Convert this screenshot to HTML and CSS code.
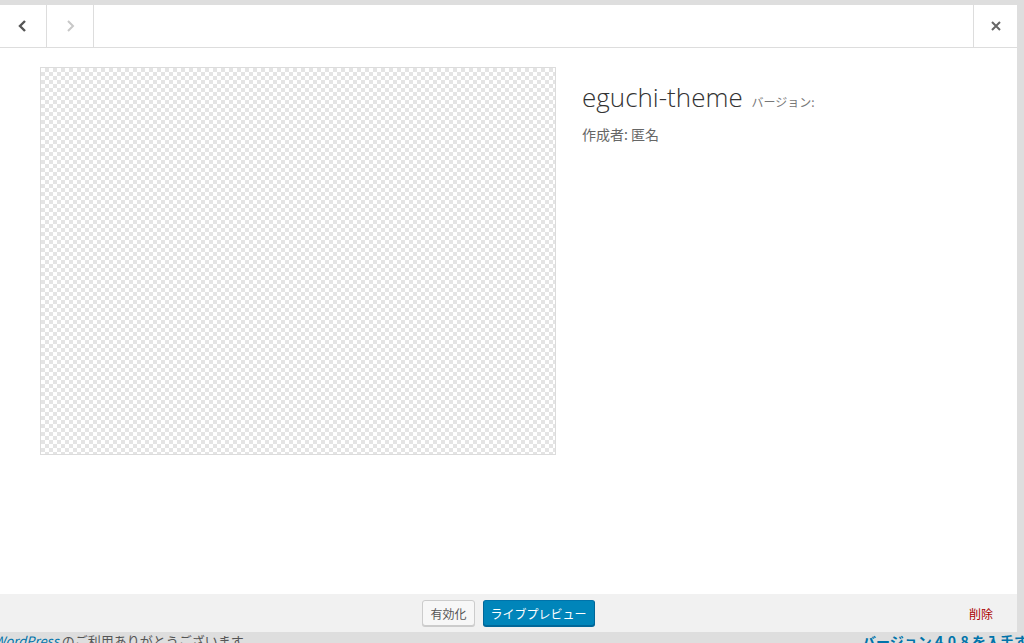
FILE: index.html
```html
<!DOCTYPE html>
<html lang="ja">
<head>
  <meta charset="UTF-8">
  <title>テーマの詳細</title>
  <link rel="stylesheet" href="styles.css">
</head>
<body>
<div class="page">
  <div class="modal">
    <div class="modal-header">
      <button class="nav-btn left" aria-label="前へ">
        <svg width="12" height="14" viewBox="0 0 12 14"><path d="M8 2 L3 7 L8 12" fill="none" stroke="#555" stroke-width="2.4"/></svg>
      </button>
      <button class="nav-btn right disabled" aria-label="次へ">
        <svg width="12" height="14" viewBox="0 0 12 14"><path d="M4 2 L9 7 L4 12" fill="none" stroke="#c8c8c8" stroke-width="2"/></svg>
      </button>
      <div class="spacer"></div>
      <button class="close-btn" aria-label="閉じる">
        <svg width="12" height="12" viewBox="0 0 12 12"><path d="M2 2 L10 10 M10 2 L2 10" fill="none" stroke="#666" stroke-width="2"/></svg>
      </button>
    </div>

    <div class="theme-about">
      <div class="screenshot"></div>
      <div class="theme-info">
        <h2 class="theme-name">eguchi-theme <span class="version">バージョン:</span></h2>
        <p class="theme-author">作成者: 匿名</p>
      </div>
    </div>

    <div class="modal-footer">
      <div class="actions">
        <button class="btn">有効化</button>
        <button class="btn btn-primary">ライブプレビュー</button>
      </div>
      <a class="delete" href="#">削除</a>
    </div>
  </div>

  <div class="wp-footer">
    <span><a class="link" href="#">WordPress</a> のご利用ありがとうございます。</span>
    <a class="upgrade" href="#">バージョン 4.0.8 を入手する</a>
  </div>
</div>
</body>
</html>
```

FILE: styles.css
```css
body {
  margin: 0;
  background-color: #dedede;
  font-family: "Noto Sans CJK JP", "Open Sans", sans-serif;
  color: #444;
  overflow: hidden;
}

.page {
  width: 1024px;
  height: 643px;
  padding-top: 5px;
  box-sizing: border-box;
  display: flex;
  flex-direction: column;
}

.modal {
  width: 1017px;
  height: 627px;
  background-color: #fff;
  display: flex;
  flex-direction: column;
  flex-shrink: 0;
}

.modal-header {
  height: 42px;
  border-bottom: 1px solid #ddd;
  display: flex;
}

.nav-btn, .close-btn {
  width: 47px;
  height: 42px;
  border: none;
  background: #fff;
  padding: 0;
  display: flex;
  align-items: center;
  justify-content: center;
  cursor: pointer;
}

.nav-btn {
  border-right: 1px solid #ddd;
}

.spacer {
  flex: 1;
}

.close-btn {
  width: 44px;
  border-left: 1px solid #ddd;
}

.theme-about {
  flex: 1;
  display: flex;
  padding: 19px 40px 0 40px;
  gap: 26px;
}

.screenshot {
  width: 514px;
  height: 386px;
  border: 1px solid #dcdcdc;
  background-color: #fff;
  background-image: conic-gradient(#e4e4e4 25%, #fff 0 50%, #e4e4e4 0 75%, #fff 0);
  background-size: 8px 8px;
  flex-shrink: 0;
}

.theme-info {
  padding-top: 10px;
}

.theme-name {
  margin: 0;
  font-family: "Open Sans", sans-serif;
  font-weight: 300;
  font-size: 26px;
  line-height: 40px;
  color: #333;
}

.version {
  font-family: "Noto Sans CJK JP", sans-serif;
  font-size: 12px;
  font-weight: 400;
  color: #777;
  margin-left: 2px;
}

.theme-author {
  margin: 2px 0 0;
  font-size: 14px;
  color: #666;
}

.modal-footer {
  height: 38px;
  margin-top: 1px;
  background-color: #f1f1f1;
  display: flex;
  align-items: center;
  position: relative;
}

.actions {
  flex: 1;
  display: flex;
  justify-content: center;
  gap: 8px;
}

.btn {
  height: 26px;
  padding: 0 7px;
  font-family: "Noto Sans CJK JP", sans-serif;
  font-size: 12px;
  color: #555;
  background-color: #f7f7f7;
  border: 1px solid #ccc;
  border-radius: 3px;
  box-shadow: 0 1px 0 #ccc;
  cursor: pointer;
}

.btn-primary {
  background-color: #0085ba;
  border-color: #0073aa #006799 #006799;
  box-shadow: 0 1px 0 #006799;
  color: #fff;
}

.delete {
  position: absolute;
  right: 24px;
  color: #a00;
  font-size: 12px;
  text-decoration: none;
}

.wp-footer {
  display: flex;
  justify-content: space-between;
  font-size: 13px;
  line-height: 16px;
  margin-top: 1px;
  color: #555;
  margin-left: -6px;
  white-space: nowrap;
}

.link {
  color: #0073aa;
  font-style: italic;
  text-decoration: none;
}

.upgrade {
  color: #0073aa;
  font-weight: bold;
  text-decoration: none;
  font-size: 14px;
  margin-right: -18px;
}
```
